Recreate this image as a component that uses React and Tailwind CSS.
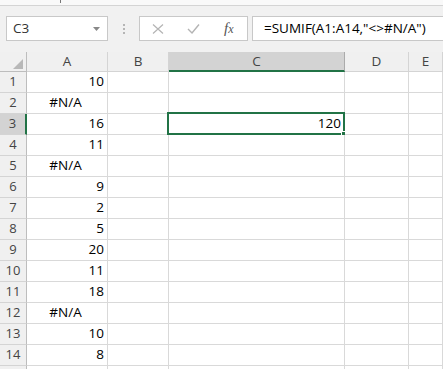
import { useState } from "react";

const cols = [
    { key: "A", width: "w-[81px]" },
    { key: "B", width: "w-[61px]" },
    { key: "C", width: "w-[176px]" },
    { key: "D", width: "w-[64px]" },
    { key: "E", width: "flex-1" },
];

const values = ["10", "#N/A", "16", "11", "#N/A", "9", "2", "5", "20", "11", "18", "#N/A", "10", "8", ""];

function Cell({ col, row, value }) {
    const isError = value.startsWith("#");
    const selected = col.key === "C" && row === 3;
    return (
        <div className={`${col.width} relative h-[21px] shrink-0 border-r border-b border-[#d9d9d9] bg-white flex items-center ${isError ? "justify-center" : "justify-end"} pr-[3px]`}>
            <span className="text-[13.5px] text-black leading-none">{value}</span>
            {selected && (
                <>
                    <div className="absolute -left-[2px] -top-[2px] w-[178px] h-[23px] border-2 border-[#217346] pointer-events-none" />
                    <div className="absolute -right-[3px] -bottom-[3px] w-[5px] h-[5px] bg-[#217346] outline outline-1 outline-white" />
                </>
            )}
        </div>
    );
}

export default function App() {
    const [active] = useState({ col: "C", row: 3 });

    return (
        <div className="w-[443px] h-[369px] overflow-hidden bg-white font-['Open_Sans',sans-serif] text-[#444]">
            {/* top strip */}
            <div className="h-[6px] bg-[#f9f9f9] border-b border-[#d4d4d4] relative">
                <div className="absolute left-[60px] top-0 w-px h-[3px] bg-[#777]" />
            </div>

            {/* formula bar */}
            <div className="h-[46px] bg-[#f1f1f1] flex items-start pt-[10px] pl-[6px]">
                <div className="w-[102px] h-[25px] bg-white border border-[#c8c8c8] flex items-center justify-between pl-[6px] pr-[7px]">
                    <span className="text-[13.5px] text-[#333]">C3</span>
                    <svg width="7" height="4" viewBox="0 0 7 4"><path d="M0 0h7L3.5 4z" fill="#888" /></svg>
                </div>
                <div className="w-[31px] h-[25px] flex flex-col items-center justify-center gap-[2px]">
                    <span className="w-[2px] h-[2px] bg-[#b5b5b5]" />
                    <span className="w-[2px] h-[2px] bg-[#b5b5b5]" />
                    <span className="w-[2px] h-[2px] bg-[#b5b5b5]" />
                </div>
                <div className="w-[109px] h-[25px] bg-white border border-[#c8c8c8] flex items-center pl-[12px]">
                    <svg width="12" height="10" viewBox="0 0 12 10" className="mr-[23px]">
                        <path d="M1 0.5l10 9M11 0.5l-10 9" stroke="#b4b4b4" strokeWidth="1.2" fill="none" />
                    </svg>
                    <svg width="13" height="10" viewBox="0 0 13 10" className="mr-[24px]">
                        <path d="M1 5l4 4l7-8.5" stroke="#b4b4b4" strokeWidth="1.4" fill="none" />
                    </svg>
                    <span className="font-['Liberation_Serif',serif] italic text-[15px] text-[#555] leading-none">f<span className="text-[12px]">x</span></span>
                </div>
                <div className="ml-[4px] flex-1 h-[25px] bg-white border-l border-y border-[#c8c8c8] flex items-center pl-[11px]">
                    <span className="text-[13.5px] text-black whitespace-nowrap">=SUMIF(A1:A14,"&lt;&gt;#N/A")</span>
                </div>
            </div>

            {/* column headers */}
            <div className="flex h-[20px] bg-[#f0f0f0]">
                <div className="w-[27px] h-[20px] shrink-0 border-r border-b border-[#bdbdbd] relative">
                    <svg width="10" height="10" viewBox="0 0 10 10" className="absolute right-[3px] bottom-[2px]">
                        <path d="M10 0v10H0z" fill="#b8b8b8" />
                    </svg>
                </div>
                {cols.map((col) => (
                    <div
                        key={col.key}
                        className={`${col.width} shrink-0 flex items-center justify-center text-[13.5px] ${col.key === active.col ? "bg-[#d3d3d3] border-b-2 border-b-[#217346] border-r border-r-[#ababab]" : "border-r border-b border-[#d4d4d4]"}`}
                    >
                        {col.key}
                    </div>
                ))}
            </div>

            {/* rows */}
            {values.map((v, i) => {
                const row = i + 1;
                const isActive = row === active.row;
                return (
                    <div key={row} className="flex">
                        <div className={`w-[27px] h-[21px] shrink-0 flex items-center justify-center text-[13px] border-b border-[#d4d4d4] ${isActive ? "bg-[#d3d3d3] border-r-2 border-r-[#217346]" : "bg-[#f0f0f0] border-r border-r-[#bdbdbd]"}`}>
                            {row < 15 ? row : ""}
                        </div>
                        {cols.map((col) => (
                            <Cell key={col.key} col={col} row={row} value={col.key === "A" ? v : col.key === "C" && row === 3 ? "120" : ""} />
                        ))}
                    </div>
                );
            })}
        </div>
    );
}
